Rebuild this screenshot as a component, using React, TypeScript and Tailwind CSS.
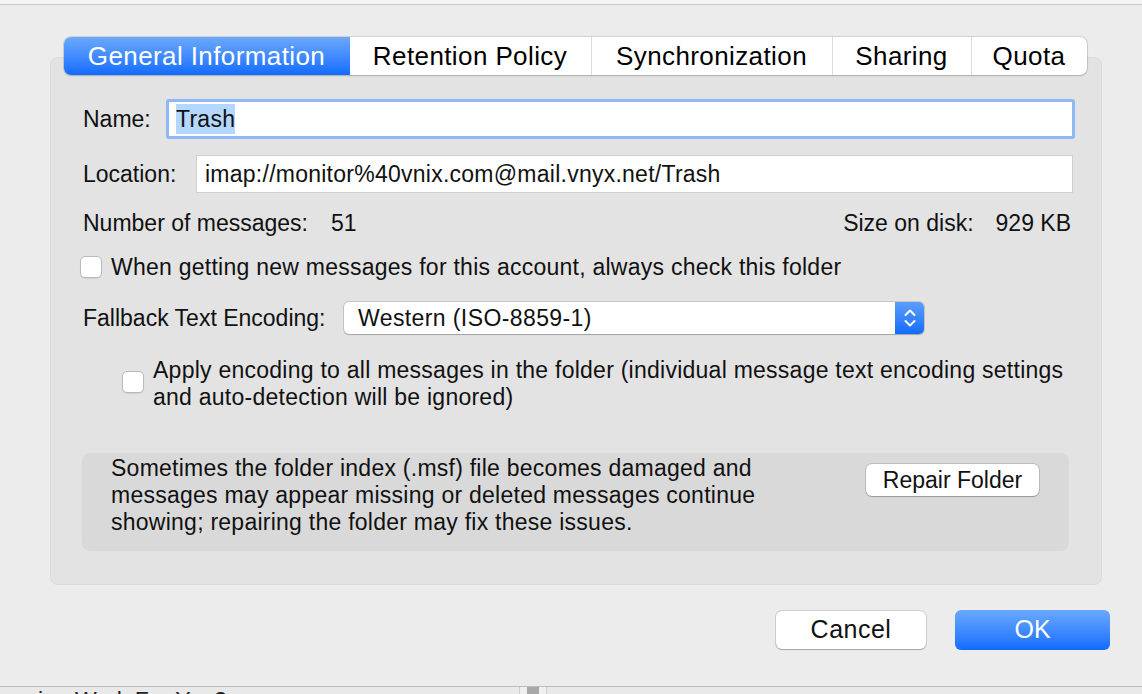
import React from 'react'

const tabs = [
  { label: 'General Information', w: 'w-[286px]', active: true },
  { label: 'Retention Policy', w: 'w-[241px]' },
  { label: 'Synchronization', w: 'w-[241px]' },
  { label: 'Sharing', w: 'w-[139px]' },
  { label: 'Quota', w: 'w-[116px]' },
]

function Checkbox() {
  return (
    <div className="w-[22px] h-[22px] shrink-0 rounded-[5px] bg-white border border-[#b9b9b9] shadow-[0_1px_1px_rgba(0,0,0,0.08)]" />
  )
}

export default function App() {
  return (
    <div className="w-[1142px] h-[694px] bg-[#ececec] flex flex-col overflow-hidden font-['Liberation_Sans',Arial,sans-serif] text-[#111]">
      {/* parent window strip */}
      <div className="h-[5px] shrink-0 bg-[#f5f5f5] border-b border-[#c9c9c9]" />

      <div className="flex-1 flex flex-col pl-[50px] pr-[40px] pt-[32px]">
        {/* Tabs */}
        <div className="relative z-10 flex justify-center -ml-[2px]">
          <div className="flex h-[38px] rounded-[7px] bg-white shadow-[0_0_0_1px_rgba(0,0,0,0.1),0_1px_2px_rgba(0,0,0,0.15)] overflow-hidden">
            {tabs.map((t, i) => (
              <div
                key={t.label}
                className={
                  t.active
                    ? `${t.w} flex items-center justify-center text-[26px] tracking-[0.4px] text-white bg-gradient-to-b from-[#6aa8fb] to-[#0f6bff]`
                    : `${t.w} flex items-center justify-center text-[26px] tracking-[0.4px] text-black ${i > 1 ? 'border-l border-[#dcdcdc]' : ''}`
                }
              >
                {t.label}
              </div>
            ))}
          </div>
        </div>

        {/* Panel */}
        <div className="-mt-[18px] h-[528px] rounded-[8px] bg-[#e3e3e3] border border-[#dadada] pl-[32px] pr-[26px] pt-[41px] text-[23px] tracking-[0.25px]">
          {/* Name */}
          <div className="flex items-center h-[40px]">
            <span className="w-[83px] tracking-normal">Name:</span>
            <div className="flex-1 h-[40px] rounded-[3px] border-[3px] border-[#8fb9f6] bg-white flex items-center pl-[7px]">
              <span className="bg-[#b3d7ff] leading-[30px]">Trash</span>
            </div>
          </div>

          {/* Location */}
          <div className="flex items-center h-[38px] mt-[16px]">
            <span className="w-[113px] tracking-normal">Location:</span>
            <div className="w-[877px] shrink-0 h-[38px] bg-white border border-[#cfcfcf] flex items-center pl-[8px]">
              imap://monitor%40vnix.com@mail.vnyx.net/Trash
            </div>
          </div>

          {/* Counts */}
          <div className="flex items-center justify-between h-[30px] mt-[15px] tracking-normal">
            <div className="flex">
              <span>Number of messages:</span>
              <span className="ml-[23px]">51</span>
            </div>
            <div className="flex pr-[4px]">
              <span>Size on disk:</span>
              <span className="ml-[22px]">929 KB</span>
            </div>
          </div>

          {/* Always check */}
          <div className="flex items-center gap-[9px] -ml-[3px] mt-[16px] h-[26px]">
            <Checkbox />
            <span>When getting new messages for this account, always check this folder</span>
          </div>

          {/* Encoding */}
          <div className="flex items-center mt-[22px] h-[32px]">
            <span className="w-[261px] tracking-normal">Fallback Text Encoding:</span>
            <div className="w-[580px] h-[32px] flex rounded-[5px] bg-white shadow-[0_0_0_1px_rgba(0,0,0,0.12),0_1px_1px_rgba(0,0,0,0.18)] overflow-hidden">
              <div className="flex-1 flex items-center pl-[14px] text-[23px] tracking-[0.4px]">Western (ISO-8859-1)</div>
              <div className="w-[29px] h-full flex items-center justify-center bg-gradient-to-b from-[#5a9df9] to-[#0f6bff]">
                <svg width="14" height="22" viewBox="0 0 14 22" fill="none" stroke="white" strokeWidth="2" strokeLinecap="round" strokeLinejoin="round">
                  <path d="M2.5 8 L7 3.5 L11.5 8" />
                  <path d="M2.5 14 L7 18.5 L11.5 14" />
                </svg>
              </div>
            </div>
          </div>

          {/* Apply encoding */}
          <div className="flex gap-[9px] ml-[39px] mt-[23px] leading-[27px]">
            <div className="pt-[14px]">
              <Checkbox />
            </div>
            <span>
              Apply encoding to all messages in the folder (individual message text encoding settings
              <br />
              and auto-detection will be ignored)
            </span>
          </div>

          {/* Repair */}
          <div className="flex justify-between items-start mt-[42px] -ml-[1px] w-[987px] h-[98px] rounded-[8px] bg-[#d9d9d9] pl-[29px] pr-[30px] pt-[2px] leading-[27px]">
            <span>
              Sometimes the folder index (.msf) file becomes damaged and
              <br />
              messages may appear missing or deleted messages continue
              <br />
              showing; repairing the folder may fix these issues.
            </span>
            <div className="mt-[9px] w-[173px] h-[32px] shrink-0 rounded-[6px] bg-white shadow-[0_0_0_1px_rgba(0,0,0,0.12),0_1px_1px_rgba(0,0,0,0.2)] flex items-center justify-center tracking-normal">
              Repair Folder
            </div>
          </div>
        </div>

        {/* Dialog buttons */}
        <div className="flex justify-end items-center gap-[29px] mt-[25px] -mr-[8px]">
          <div className="w-[150px] h-[38px] rounded-[6px] bg-white shadow-[0_0_0_1px_rgba(0,0,0,0.12),0_1px_1px_rgba(0,0,0,0.2)] flex items-center justify-center text-[25px] tracking-[0.5px]">
            Cancel
          </div>
          <div className="w-[155px] h-[40px] rounded-[6px] bg-gradient-to-b from-[#6aa8fb] to-[#0f6bff] flex items-center justify-center text-[25px] text-white">
            OK
          </div>
        </div>
      </div>

      {/* window below */}
      <div className="h-[8px] shrink-0 border-t border-[#bdbdbd] bg-[#e9e9e9] relative overflow-hidden">
        <div className="absolute left-[38px] top-[3px] text-[23px] leading-[23px] text-[#222]">ing Work For You?</div>
        <div className="absolute left-[519px] top-0 h-full w-[28px] border-x border-[#cfcfcf] bg-[#f0f0f0]">
          <div className="mx-auto w-[12px] h-full bg-[#a8a8a8]" />
        </div>
      </div>
    </div>
  )
}
